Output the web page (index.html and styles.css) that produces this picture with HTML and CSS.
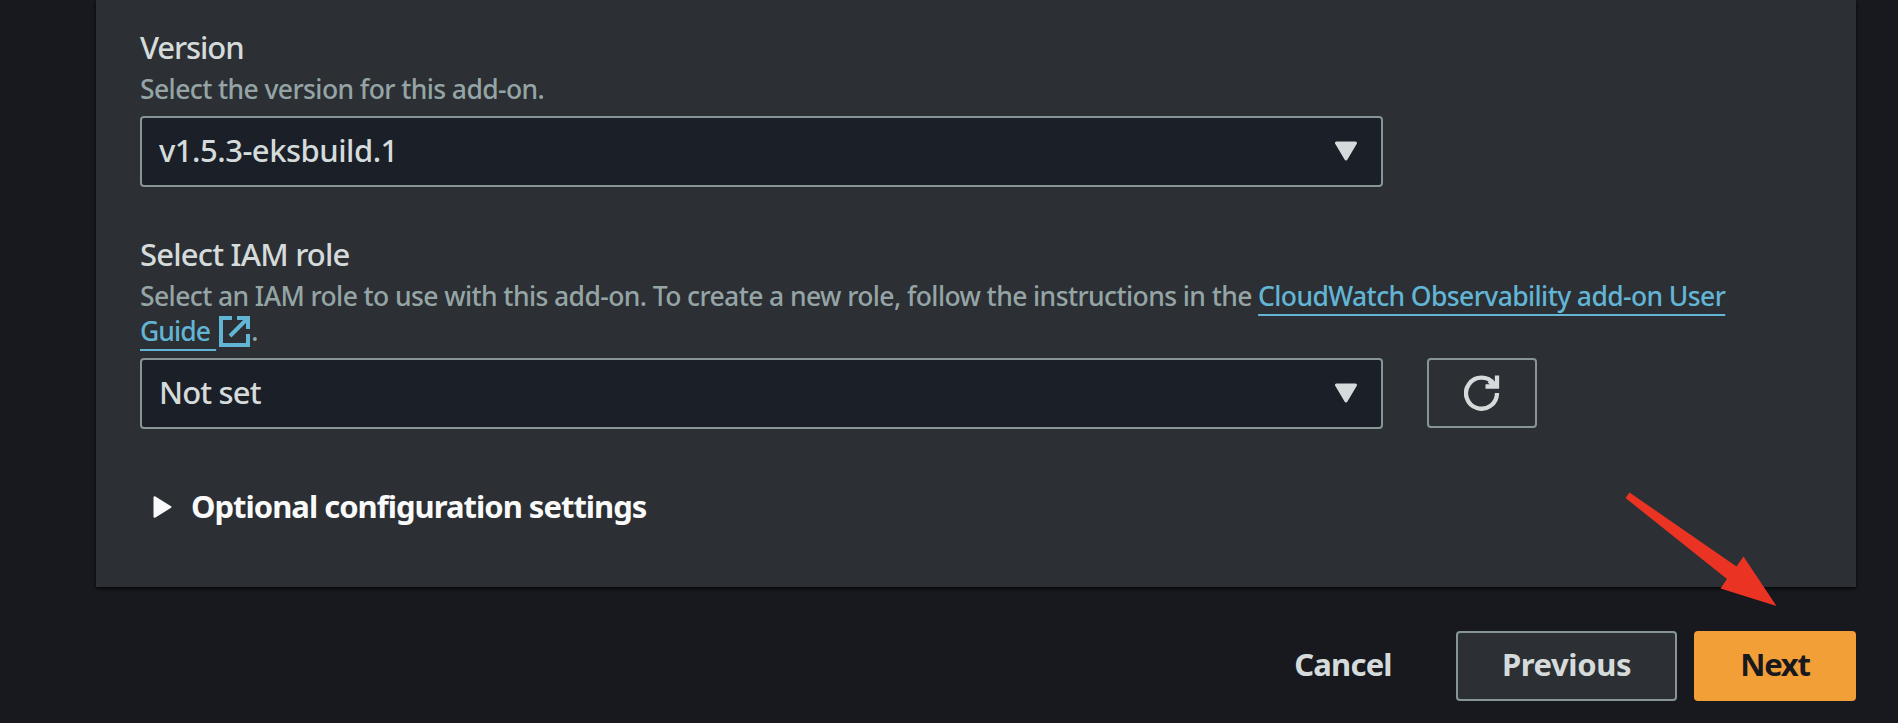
FILE: index.html
```
<!DOCTYPE html>
<html lang="en">
<head>
<meta charset="utf-8">
<title>Configure add-on</title>
<link rel="stylesheet" href="styles.css">
</head>
<body>
<main class="page">
  <section class="card">
    <div class="field">
      <div class="label label-version">Version</div>
      <div class="hint">Select the version for this add-on.</div>
      <div class="select">
        <span>v1.5.3-eksbuild.1</span>
        <svg class="caret" viewBox="0 0 24 20"><path d="M2.500 2h19L12 18z"/></svg>
      </div>
    </div>
    <div class="field">
      <div class="label">Select IAM role</div>
      <div class="hint hint-long">Select an IAM role to use with this add-on. To create a new role, follow the instructions in the <a class="link">CloudWatch Observability add-on User<br><span class="guide">Guide&nbsp;</span></a><svg class="external" viewBox="0 0 31 31"><path d="M13 2H2v27h27V18M18 2H29v11M28 3L11 20"/></svg><span>.</span></div>
      <div class="row">
        <div class="select select-role">
          <span>Not set</span>
          <svg class="caret" viewBox="0 0 24 20"><path d="M2.500 2h19L12 18z"/></svg>
        </div>
        <button class="refresh" aria-label="Refresh">
          <svg viewBox="0 0 36 36"><path d="M33 18A15.500 15.500 0 1 1 30 9"/><path d="M33 .500V11.500H21.500M25 6l7 5"/></svg>
        </button>
      </div>
    </div>
    <div class="expander">
      <svg viewBox="0 0 20 24"><path d="M1.500 2.200v19.600L17.500 12z"/></svg>
      <span>Optional configuration settings</span>
    </div>
  </section>
  <footer class="actions">
    <button class="button cancel">Cancel</button>
    <button class="button previous">Previous</button>
    <button class="button next">Next</button>
  </footer>
  <svg class="arrow" viewBox="0 0 154 116"><path d="M5.500 2.500L112.500 76.500 119.500 66.500 152.500 116 96.500 98.500 103 89 1.500 8z"/></svg>
</main>
</body>
</html>
```
FILE: styles.css
```
* { box-sizing: border-box; }
body {
  margin: 0;
  background: #18191e;
  color: #d5dbdb;
  font-family: "Noto Sans", "Open Sans", sans-serif;
}
.page {
  position: relative;
  height: 723px;
  padding: 0 42px 0 96px;
  overflow: hidden;
}
.card {
  height: 587px;
  padding: 27px 44px 0;
  background: #2c2f33;
  box-shadow: 0 2px 3px rgba(0, 0, 0, .6), 0 0 3px rgba(0, 0, 0, .35);
}
.field { margin-bottom: 47px; }
.label {
  height: 45px;
  font-size: 31px;
  font-weight: 500;
  line-height: 41px;
  letter-spacing: -.8px;
}
.label-version { letter-spacing: -1.1px; }
.hint {
  height: 35px;
  margin-bottom: 9px;
  color: #95a5a6;
  font-size: 26.500px;
  font-weight: 500;
  line-height: 35px;
  letter-spacing: -.6px;
  white-space: nowrap;
}
.hint-long { height: 70px; }
.link {
  color: #62b5d5;
  letter-spacing: -.61px;
  text-decoration: underline;
  text-decoration-thickness: 2px;
  text-underline-offset: 8px;
  text-decoration-skip-ink: none;
}
.guide { letter-spacing: -.9px; }
.external {
  width: 31px;
  height: 31px;
  margin: -6px 1px -6px 3px;
  vertical-align: 0;
  fill: none;
  stroke: #62b5d5;
  stroke-width: 4;
}
.row { display: flex; gap: 44px; }
.select {
  display: flex;
  align-items: center;
  justify-content: space-between;
  width: 1243px;
  height: 71px;
  padding: 0 23px 2px 17px;
  border: 2px solid #879596;
  border-radius: 4px;
  background: #1b1f28;
  font-size: 31px;
  font-weight: 500;
  line-height: 40px;
  letter-spacing: -.5px;
}
.select-role { letter-spacing: -.85px; }
.select span { margin-top: -1px; }
.caret {
  width: 24px;
  height: 20px;
  fill: #d5dbdb;
  stroke: #d5dbdb;
  stroke-width: 3;
  stroke-linejoin: round;
}
.refresh {
  display: flex;
  align-items: center;
  justify-content: center;
  width: 110px;
  height: 70px;
  padding: 0;
  border: 2px solid #879596;
  border-radius: 4px;
  background: transparent;
}
.refresh svg {
  width: 36px;
  height: 36px;
  fill: none;
  stroke: #d5dbdb;
  stroke-width: 4.300;
}
.expander {
  display: flex;
  align-items: center;
  gap: 18px;
  height: 62px;
  padding-left: 13px;
  color: #fafafa;
  font-size: 31px;
  font-weight: 700;
  letter-spacing: -1px;
}
.expander span { margin-top: -2px; }
.expander svg {
  width: 20px;
  height: 24px;
  fill: currentColor;
  stroke: currentColor;
  stroke-width: 2;
  stroke-linejoin: round;
}
.actions {
  display: flex;
  justify-content: flex-end;
  padding-top: 44px;
}
.button {
  height: 70px;
  padding: 0 0 5px;
  border: 0;
  border-radius: 4px;
  background: transparent;
  color: #d5dbdb;
  font: 700 31px "Noto Sans", "Open Sans", sans-serif;
}
.cancel { width: 186px; margin-right: 20px; letter-spacing: -.8px; }
.previous {
  width: 221px;
  margin-right: 17px;
  border: 2px solid #879596;
  background: #2c2f33;
  letter-spacing: -.4px;
}
.next { width: 162px; background: #f29f38; color: #18191e; letter-spacing: -1.2px; }
.arrow {
  position: absolute;
  left: 1624px;
  top: 490px;
  width: 154px;
  height: 116px;
  fill: #ea3323;
}
```
